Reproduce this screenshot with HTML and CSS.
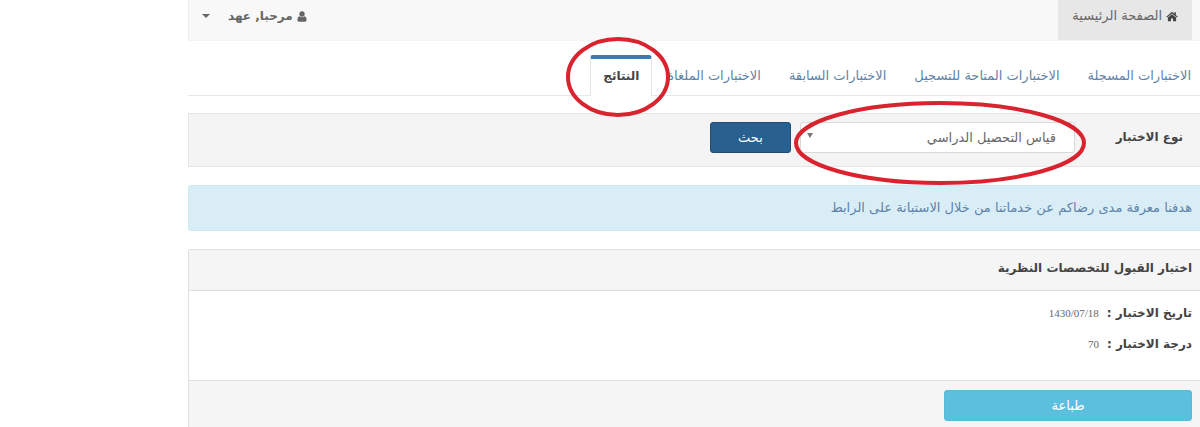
FILE: index.html
```html
<!DOCTYPE html>
<html lang="ar" dir="rtl">
<head>
  <meta charset="UTF-8" />
  <title>النتائج</title>
  <link rel="stylesheet" href="styles.css">
</head>
<body>
  <div class="container">
    <!-- Top navigation bar -->
    <nav class="navbar">
      <a class="nav-home" href="#">
        <svg class="icon" viewBox="0 0 14 12" aria-hidden="true">
          <path d="M7 0.5 L0.3 6.2 L1.2 7.2 L7 2.4 L12.8 7.2 L13.7 6.2 L11.5 4.3 V1 H9.7 V2.8 Z" />
          <path d="M7 3.4 L2.2 7.3 V11.5 H5.8 V8.2 H8.2 V11.5 H11.8 V7.3 Z" />
        </svg>
        <span>الصفحة الرئيسية</span>
      </a>
      <button class="nav-user" type="button">
        <svg class="icon icon-user" viewBox="0 0 10 12" aria-hidden="true">
          <circle cx="5" cy="3.3" r="2.9" />
          <path d="M2.3 5.6 C0.7 6 0 7.6 0 9.8 C0 11 0.8 11.6 1.8 11.6 H8.2 C9.2 11.6 10 11 10 9.8 C10 7.6 9.3 6 7.7 5.6 C6.2 7.1 3.8 7.1 2.3 5.6 Z" />
        </svg>
        <span>مرحبا, عهد</span>
        <span class="caret"></span>
      </button>
    </nav>

    <!-- Exam tabs -->
    <div class="tabs">
      <a class="tab" href="#">الاختبارات المسجلة</a>
      <a class="tab" href="#">الاختبارات المتاحة للتسجيل</a>
      <a class="tab" href="#">الاختبارات السابقة</a>
      <a class="tab" href="#">الاختبارات الملغاة</a>
      <a class="tab active" href="#">النتائج</a>
    </div>

    <!-- Search by exam type -->
    <form class="search">
      <label class="search-label" for="examType">نوع الاختبار</label>
      <div class="select-wrap">
        <select class="select" id="examType">
          <option>قياس التحصيل الدراسي</option>
        </select>
      </div>
      <button class="btn btn-search" type="button">بحث</button>
    </form>

    <div class="alert">
      <a href="#">هدفنا معرفة مدى رضاكم عن خدماتنا من خلال الاستبانة على الرابط</a>
    </div>

    <!-- Exam result -->
    <section class="panel">
      <h2 class="panel-heading">اختبار القبول للتخصصات النظرية</h2>
      <dl class="panel-body">
        <div class="row">
          <dt>تاريخ الاختبار :</dt>
          <dd>1430/07/18</dd>
        </div>
        <div class="row">
          <dt>درجة الاختبار :</dt>
          <dd>70</dd>
        </div>
      </dl>
      <div class="panel-footer">
        <button class="btn btn-print" type="button">طباعة</button>
      </div>
    </section>
  </div>

  <!-- Red rings around the results tab and the exam type -->
  <svg class="ring ring-tab" viewBox="0 0 106 82" aria-hidden="true">
    <ellipse cx="53" cy="41" rx="50" ry="38" />
  </svg>
  <svg class="ring ring-type" viewBox="0 0 294 86" aria-hidden="true">
    <ellipse cx="147" cy="43" rx="144" ry="40" />
  </svg>
</body>
</html>
```

FILE: styles.css
```css
* {
  box-sizing: border-box;
}

body {
  position: relative;
  margin: 0;
  background: #fff;
  color: #444;
  font-family: "DejaVu Sans", sans-serif;
  font-size: 13px;
  line-height: 20px;
}

a {
  color: #5f83a8;
  text-decoration: none;
}

button,
select {
  font: inherit;
}

.container {
  margin-left: 188px;
}

/* Navigation bar */
.navbar {
  display: flex;
  justify-content: space-between;
  height: 41px;
  padding: 0 8px;
  background: #f8f8f8;
  border-bottom: 1px solid #f4f4f4;
  border-left: 1px solid #eee;
}

.nav-home,
.nav-user {
  display: flex;
  align-items: center;
  gap: 4px;
  padding: 0 14px 8px;
  color: #666;
}

.nav-home {
  background: #e7e7e7;
}

.nav-user {
  padding-right: 0;
  padding-left: 5px;
  border: 0;
  background: none;
  font-size: 12px;
  font-weight: bold;
}

.icon {
  width: 12px;
  height: 11px;
  fill: #444;
}

.icon-user {
  width: 10px;
  fill: #666;
}

.caret {
  margin-right: 14px;
  border: 4px solid transparent;
  border-top-color: #666;
  border-bottom: 0;
}

/* Tabs */
.tabs {
  display: flex;
  gap: 2px;
  height: 55px;
  padding-top: 14px;
  border-bottom: 1px solid #e8e8e8;
}

.tab {
  height: 41px;
  padding: 11px 13px 0;
}

.tab:first-child {
  padding-right: 9px;
}

.tab.active {
  padding: 7px 12px 0;
  border: 1px solid #e4e4e4;
  border-top: 4px solid #3d7ab5;
  border-bottom: 0;
  border-radius: 3px 3px 0 0;
  background: #fff;
  color: #444;
  font-size: 12px;
  font-weight: bold;
}

/* Search box */
.search {
  display: flex;
  height: 54px;
  margin-top: 17px;
  padding: 8px 17px;
  background: #f4f4f4;
  border: 1px solid #e6e6e6;
  border-right: 0;
}

.search-label {
  width: 108px;
  padding-top: 5px;
  font-size: 12px;
  font-weight: bold;
}

.select-wrap {
  position: relative;
  width: 275px;
  height: 31px;
  margin-left: 9px;
}

.select-wrap::after {
  content: "";
  position: absolute;
  top: 11px;
  left: 7px;
  border: 3px solid transparent;
  border-top: 5px solid #777;
  border-bottom: 0;
}

.select {
  width: 100%;
  height: 31px;
  padding: 0 18px;
  border: 1px solid #d8d8d8;
  border-radius: 3px;
  background: #fff;
  color: #666;
  appearance: none;
}

.btn {
  height: 31px;
  padding: 0;
  border: 1px solid;
  border-radius: 3px;
  color: #fff;
}

.btn-search {
  width: 81px;
  background: #286090;
  border-color: #204d74;
}

/* Survey notice */
.alert {
  margin-top: 18px;
  padding: 12px 8px;
  background: #d9edf7;
  border: 1px solid #ccebf2;
  border-right: 0;
  border-top-left-radius: 3px;
  border-bottom-left-radius: 3px;
}

/* Result panel */
.panel {
  margin-top: 18px;
  border: 1px solid #e0e0e0;
  border-right: 0;
  border-bottom: 0;
  border-top-left-radius: 3px;
}

.panel-heading {
  margin: 0;
  padding: 8px 8px 12px;
  background: #f5f5f5;
  border-bottom: 1px solid #ddd;
  font-size: 12px;
}

.panel-body {
  margin: 0;
  padding: 12px 8px 26px;
}

.row {
  display: flex;
  gap: 8px;
}

.row + .row {
  margin-top: 11px;
}

dt {
  font-size: 12px;
  font-weight: bold;
}

dd {
  margin: 0;
  color: #666;
  font-family: "Liberation Serif", serif;
  font-size: 11px;
}

.panel-footer {
  padding: 9px 8px 6px;
  background: #f5f5f5;
  border-top: 1px solid #e0e0e0;
}

.btn-print {
  display: block;
  width: 248px;
  background: #5bc0de;
  border-color: #54bbda;
}

/* Highlight rings */
.ring {
  position: absolute;
  fill: none;
  stroke: #d9232e;
  stroke-width: 4;
  pointer-events: none;
}

.ring-tab {
  top: 36px;
  left: 565px;
  width: 106px;
  height: 82px;
}

.ring-type {
  top: 100px;
  left: 793px;
  width: 294px;
  height: 86px;
}
```
